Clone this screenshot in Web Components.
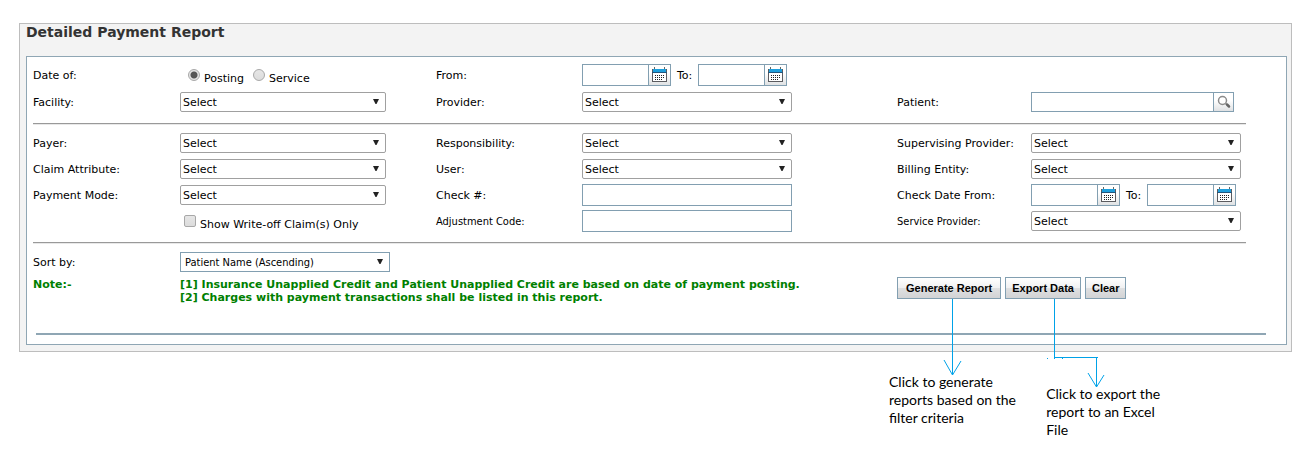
<!DOCTYPE html>
<html lang="en">
<head>
<meta charset="utf-8">
<title>Detailed Payment Report</title>
<style>
	body {
		display: flow-root;
		min-height: 100vh;
		margin: 0;
		background: #fff;
		color: #000;
		font: 11px/13px "DejaVu Sans", Verdana, sans-serif;
	}
</style>
</head>
<body>
<report-panel heading="Detailed Payment Report">
	<filter-group gap="5">
		<radio-field label="Date of:" options="Posting,Service"></radio-field>
		<date-range label="From:"></date-range>
		<span class="blank"></span>
		<select-field label="Facility:" options="Select"></select-field>
		<select-field label="Provider:" options="Select"></select-field>
		<text-field label="Patient:" search></text-field>
	</filter-group>

	<filter-group>
		<select-field label="Payer:" options="Select"></select-field>
		<select-field label="Responsibility:" options="Select"></select-field>
		<select-field label="Supervising Provider:" options="Select"></select-field>
		<select-field label="Claim Attribute:" options="Select"></select-field>
		<select-field label="User:" options="Select"></select-field>
		<select-field label="Billing Entity:" options="Select"></select-field>
		<select-field label="Payment Mode:" options="Select"></select-field>
		<text-field label="Check #:"></text-field>
		<date-range label="Check Date From:"></date-range>
		<check-field label="Show Write-off Claim(s) Only"></check-field>
		<text-field label="Adjustment Code:" narrow></text-field>
		<select-field label="Service Provider:" options="Select" narrow></select-field>
	</filter-group>

	<filter-group>
		<select-field label="Sort by:" options="Patient Name (Ascending)" square></select-field>
	</filter-group>

	<report-footer slot="footer">
		<span slot="note">[1] Insurance Unapplied Credit and Patient Unapplied Credit are based on date of payment posting.</span>
		<span slot="note">[2] Charges with payment transactions shall be listed in this report.</span>
		<action-button wide callout="straight">Generate Report
			<span slot="hint">Click to generate reports based on the filter criteria</span>
		</action-button>
		<action-button callout="elbow">Export Data
			<span slot="hint">Click to export the report to an Excel File</span>
		</action-button>
		<action-button>Clear</action-button>
	</report-footer>
</report-panel>

<script>
const COLUMNS = '147fr 256fr 146fr 315fr 134fr 215fr';

const FIELD_STYLE = `
	:host {
		display: grid;
		grid-column: span 2;
		grid-template-columns: subgrid;
		align-items: center;
		height: 22px;
	}

	* {
		box-sizing: border-box;
	}

	.label {
		white-space: nowrap;
	}

	:host([narrow]) .label {
		font-family: "DejaVu Sans Condensed", Tahoma, sans-serif;
	}

	.row {
		display: flex;
		align-items: center;
	}

	input, select, button {
		margin: 0;
		font: inherit;
		color: inherit;
	}

	input[type="text"] {
		width: 210px;
		height: 22px;
		padding: 0 3px;
		border: 1px solid #829fb1;
		background: #fff;
	}

	.addon {
		display: flex;
		align-items: center;
		justify-content: center;
		width: 22px;
		height: 22px;
		padding: 0;
		border: 1px solid #829fb1;
		border-left: 0;
		background: linear-gradient(#fff 40%, #dfe1e3);
	}
`;

const CALENDAR = `
	<svg width="15" height="16" viewBox="0 0 15 16" shape-rendering="crispEdges" aria-hidden="true">
		<path fill="#666" d="M2 0h1v2H2zM12 0h1v2h-1z"/>
		<path fill="#5b5b5f" d="M0 2h15v13H0z"/>
		<path fill="#fff" d="M1 6h13v8H1z"/>
		<path fill="#1e9fdc" d="M1 2h13v3H1z"/>
		<path fill="#24567c" d="M0 5h15v1H0z"/>
		<path stroke="#222" stroke-dasharray="1 1" d="M3 8.500h9M3 10.500h9M3 12.500h7"/>
	</svg>
`;

const MAGNIFIER = `
	<svg width="14" height="14" viewBox="0 0 14 14" aria-hidden="true">
		<circle cx="5.500" cy="5.500" r="4" fill="#fff" stroke="#8b8b8b" stroke-width="1.500"/>
		<path d="M8.500 8.500l1 1" stroke="#999" stroke-width="1.500"/>
		<path d="M10 9.500l2 2" stroke="#666" stroke-width="2.500" stroke-linecap="round"/>
	</svg>
`;

class BaseElement extends HTMLElement {

	connectedCallback() {
		if (this.shadowRoot) return;

		this.attachShadow({ mode: 'open' });
		const template = document.createElement('template');
		template.innerHTML = this.render();
		this.shadowRoot.appendChild(template.content.cloneNode(true));
	}

	get label() {
		return this.getAttribute('label') || '';
	}

	get options() {
		return (this.getAttribute('options') || '').split(',');
	}

}

class ReportPanel extends BaseElement {

	render() {
		return `
			<style>
				:host {
					display: block;
					margin: 23px 24px 0 19px;
					padding: 0 4px 6px 6px;
					border: 1px solid #bdbdbd;
					background: #f3f3f3;
				}

				h1 {
					margin: 0 0 16px;
					font-size: 14px;
					line-height: 16px;
					color: #333;
				}

				form {
					padding: 7px 0 9px 6px;
					border: 1px solid #8fa6b4;
					background: #fff;
				}

				.filters {
					margin-right: 40px;
				}
			</style>
			<h1>${this.getAttribute('heading')}</h1>
			<form>
				<div class="filters"><slot></slot></div>
				<slot name="footer"></slot>
			</form>
		`;
	}

}

class FilterGroup extends BaseElement {

	render() {
		return `
			<style>
				:host {
					display: grid;
					grid-template-columns: ${COLUMNS};
					row-gap: ${this.getAttribute('gap') || 4}px;
				}

				:host(:not(:first-child)) {
					margin-top: 10px;
					padding-top: 8px;
					border-top: 1px solid #999;
					box-shadow: inset 0 1px #e8e8e8;
				}

				::slotted(.blank) {
					grid-column: span 2;
				}
			</style>
			<slot></slot>
		`;
	}

}

class SelectField extends BaseElement {

	render() {
		return `
			<style>
				${FIELD_STYLE}

				.select {
					display: grid;
					align-items: center;
					width: 210px;
				}

				:host(:nth-child(3n + 1)) .select {
					width: 206px;
				}

				:host([square]) .select {
					width: 210px;
				}

				select {
					grid-area: 1 / 1;
					height: 20px;
					padding: 0 20px 0 2px;
					border: 1px solid #a0a0a0;
					border-radius: 2px;
					background: #fff;
					appearance: none;
				}

				:host([square]) select {
					padding-left: 4px;
					border-color: #829fb1;
					border-radius: 0;
					font-family: "DejaVu Sans Condensed", Tahoma, sans-serif;
				}

				svg {
					grid-area: 1 / 1;
					justify-self: end;
					margin-right: 7px;
					pointer-events: none;
				}
			</style>
			<label class="label" for="control">${this.label}</label>
			<div class="select">
				<select id="control">
					${this.options.map((option) => `<option>${option}</option>`).join('')}
				</select>
				<svg width="6" height="6" viewBox="0 0 6 6" aria-hidden="true"><path fill="#222" d="M0 0h6L3.500 5h-1z"/></svg>
			</div>
		`;
	}

}

class TextField extends BaseElement {

	render() {
		const search = this.hasAttribute('search');

		return `
			<style>
				${FIELD_STYLE}

				:host([search]) input {
					width: 183px;
					height: 20px;
				}

				.addon {
					width: 20px;
					height: 20px;
				}
			</style>
			<label class="label" for="control">${this.label}</label>
			<div class="row">
				<input type="text" id="control">
				${search ? `<button type="button" class="addon" aria-label="Search patient">${MAGNIFIER}</button>` : ''}
			</div>
		`;
	}

}

class DateRange extends BaseElement {

	render() {
		return `
			<style>
				${FIELD_STYLE}

				input[type="text"] {
					width: 67px;
				}

				.to {
					margin: 0 6px;
				}
			</style>
			<label class="label" for="from">${this.label}</label>
			<div class="row">
				<input type="text" id="from">
				<button type="button" class="addon" aria-label="Pick start date">${CALENDAR}</button>
				<label class="to" for="to">To:</label>
				<input type="text" id="to">
				<button type="button" class="addon" aria-label="Pick end date">${CALENDAR}</button>
			</div>
		`;
	}

}

const TOGGLE_STYLE = `
	.toggle {
		display: flex;
		gap: 4px;
	}

	.toggle span {
		padding-top: 3px;
		white-space: nowrap;
	}

	.toggle input {
		width: 12px;
		height: 12px;
		border: 1px solid #a8a8a8;
		background: linear-gradient(#e6e6e6, #dcdcdc);
		appearance: none;
	}
`;

class RadioField extends BaseElement {

	render() {
		return `
			<style>
				${FIELD_STYLE}
				${TOGGLE_STYLE}

				.row {
					gap: 9px;
					padding: 4px 0 0 8px;
				}

				.toggle input {
					border-radius: 50%;
				}

				.toggle input:checked {
					background: radial-gradient(circle, #555 3px, #e4e4e4 4px);
				}
			</style>
			<span class="label" id="name">${this.label}</span>
			<div class="row" role="radiogroup" aria-labelledby="name">
				${this.options.map((option, i) => `
					<label class="toggle">
						<input type="radio" name="choice" ${i === 0 ? 'checked' : ''}>
						<span>${option}</span>
					</label>
				`).join('')}
			</div>
		`;
	}

}

class CheckField extends BaseElement {

	render() {
		return `
			<style>
				${FIELD_STYLE}
				${TOGGLE_STYLE}

				.toggle {
					grid-column: 2;
					padding: 3px 0 0 4px;
				}

				.toggle input {
					border-radius: 2px;
				}

				.toggle input:checked {
					background: #555;
				}
			</style>
			<label class="toggle">
				<input type="checkbox">
				<span>${this.label}</span>
			</label>
		`;
	}

}

class ReportFooter extends BaseElement {

	render() {
		return `
			<style>
				:host {
					display: block;
				}

				.content {
					display: grid;
					grid-template-columns: ${COLUMNS};
					margin: 4px 40px 0 0;
				}

				.title, .notes {
					padding-top: 1px;
					color: #008000;
					font-weight: bold;
				}

				.notes {
					display: flex;
					flex-direction: column;
					grid-column: span 3;
				}

				.actions {
					display: flex;
					align-items: start;
					gap: 4px;
					grid-column: span 2;
				}

				hr {
					height: 2px;
					margin: 29px 20px 0 3px;
					border: 0;
					background: #8fa6b4;
				}
			</style>
			<div class="content">
				<div class="title">Note:-</div>
				<div class="notes"><slot name="note"></slot></div>
				<div class="actions"><slot></slot></div>
			</div>
			<hr>
		`;
	}

}

// Leader lines start at the lower edge of the button.
const CALLOUTS = {
	straight: `
		<svg width="20" height="78" viewBox="0 0 20 78" aria-hidden="true">
			<path d="M10.500 0v76M2 61l8.500 15L19 62"/>
		</svg>
	`,
	elbow: `
		<svg width="62" height="90" viewBox="0 0 62 90" aria-hidden="true">
			<path d="M10.500 0v60M10.500 58.500h43.500M52.500 58v30M44 74l8.500 14L60 76M3 59.500h1M18 59.500h1"/>
		</svg>
	`,
};

class ActionButton extends BaseElement {

	render() {
		const callout = CALLOUTS[this.getAttribute('callout')];

		return `
			<style>
				:host {
					display: block;
					position: relative;
				}

				button {
					display: block;
					height: 22px;
					padding: 0 6px;
					border: 1px solid #829fb1;
					background: linear-gradient(#fff, #f0f0f1 50%, #dfe0e1 51%, #d2d3d5);
					color: #000;
					font: bold 11px/20px "Liberation Sans", Arial, sans-serif;
					white-space: nowrap;
				}

				:host([wide]) button {
					padding: 0 8px;
				}

				.callout {
					position: absolute;
					z-index: 1;
					top: 22px;
					left: 45px;
					width: 140px;
					pointer-events: none;
				}

				:host([callout="elbow"]) .callout {
					left: 39px;
				}

				svg {
					display: block;
					fill: none;
					stroke: #00a2e8;
				}

				.hint {
					width: 140px;
					margin: -4px 0 0 -53px;
					font: 14px/18px Lato, Calibri, sans-serif;
				}

				:host([callout="elbow"]) .hint {
					width: 120px;
					margin-left: 2px;
				}
			</style>
			<button type="button"><slot></slot></button>
			${callout ? `<div class="callout">${callout}<div class="hint"><slot name="hint"></slot></div></div>` : ''}
		`;
	}

}

customElements.define('report-panel', ReportPanel);
customElements.define('filter-group', FilterGroup);
customElements.define('select-field', SelectField);
customElements.define('text-field', TextField);
customElements.define('date-range', DateRange);
customElements.define('radio-field', RadioField);
customElements.define('check-field', CheckField);
customElements.define('report-footer', ReportFooter);
customElements.define('action-button', ActionButton);
</script>
</body>
</html>
